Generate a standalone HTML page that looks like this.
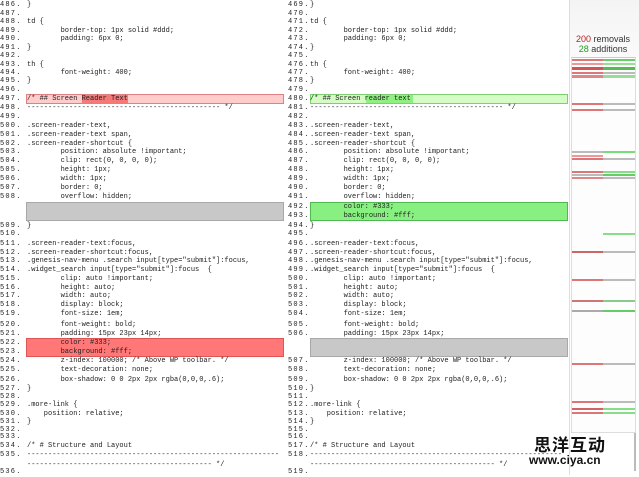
<!DOCTYPE html>
<html><head><meta charset="utf-8"><style>
body{margin:0;width:639px;height:475px;overflow:hidden;background:#fff;position:relative;font-family:"Liberation Mono",monospace;}
.l{position:absolute;height:9px;line-height:9px;font-size:7px;color:#222;white-space:pre;tab-size:8;-moz-tab-size:8;}
.n{position:absolute;letter-spacing:1.2px;}
.b{position:absolute;box-sizing:border-box;}
.m{position:absolute;height:2px;}
</style></head><body>

<!-- highlight boxes -->
<div class="b" style="left:26px;top:94px;width:258px;height:10px;background:#ffcccc;border:1px solid #e08080"></div>
<div class="b" style="left:82px;top:95px;width:46px;height:8px;background:#f47a7a"></div>
<div class="b" style="left:26px;top:202px;width:258px;height:19px;background:#c8c8c8;border:1px solid #a8a8a8"></div>
<div class="b" style="left:26px;top:338px;width:258px;height:19px;background:#f77;border:1px solid #d55"></div>

<div class="b" style="left:310px;top:94px;width:258px;height:10px;background:#d4fcc4;border:1px solid #7cd070"></div>
<div class="b" style="left:366px;top:95px;width:47px;height:8px;background:#8ef080"></div>
<div class="b" style="left:310px;top:202px;width:258px;height:19px;background:#88f080;border:1px solid #50b850"></div>
<div class="b" style="left:310px;top:338px;width:258px;height:19px;background:#c8c8c8;border:1px solid #a8a8a8"></div>
<div class="b" style="left:569px;top:0;width:1px;height:475px;background:#ddd"></div>

<!-- LEFT -->
<div class="l" style="top:0.5px;left:0"><span class="n">486.</span><span style="position:absolute;left:27px">}</span></div>
<div class="l" style="top:9.5px;left:0"><span class="n">487.</span></div>
<div class="l" style="top:18.2px;left:0"><span class="n">488.</span><span style="position:absolute;left:27px">td {</span></div>
<div class="l" style="top:26.5px;left:0"><span class="n">489.</span><span style="position:absolute;left:27px">	border-top: 1px solid #ddd;</span></div>
<div class="l" style="top:34.8px;left:0"><span class="n">490.</span><span style="position:absolute;left:27px">	padding: 6px 0;</span></div>
<div class="l" style="top:43.8px;left:0"><span class="n">491.</span><span style="position:absolute;left:27px">}</span></div>
<div class="l" style="top:52.2px;left:0"><span class="n">492.</span></div>
<div class="l" style="top:60.8px;left:0"><span class="n">493.</span><span style="position:absolute;left:27px">th {</span></div>
<div class="l" style="top:68.8px;left:0"><span class="n">494.</span><span style="position:absolute;left:27px">	font-weight: 400;</span></div>
<div class="l" style="top:77.2px;left:0"><span class="n">495.</span><span style="position:absolute;left:27px">}</span></div>
<div class="l" style="top:85.8px;left:0"><span class="n">496.</span></div>
<div class="l" style="top:94.5px;left:0"><span class="n">497.</span><span style="position:absolute;left:27px">/* ## Screen Reader Text</span></div>
<div class="l" style="top:103.8px;left:0"><span class="n">498.</span><span style="position:absolute;left:27px">---------------------------------------------- */</span></div>
<div class="l" style="top:112.8px;left:0"><span class="n">499.</span></div>
<div class="l" style="top:121.8px;left:0"><span class="n">500.</span><span style="position:absolute;left:27px">.screen-reader-text,</span></div>
<div class="l" style="top:130.5px;left:0"><span class="n">501.</span><span style="position:absolute;left:27px">.screen-reader-text span,</span></div>
<div class="l" style="top:139.5px;left:0"><span class="n">502.</span><span style="position:absolute;left:27px">.screen-reader-shortcut {</span></div>
<div class="l" style="top:148.2px;left:0"><span class="n">503.</span><span style="position:absolute;left:27px">	position: absolute !important;</span></div>
<div class="l" style="top:156.8px;left:0"><span class="n">504.</span><span style="position:absolute;left:27px">	clip: rect(0, 0, 0, 0);</span></div>
<div class="l" style="top:166.2px;left:0"><span class="n">505.</span><span style="position:absolute;left:27px">	height: 1px;</span></div>
<div class="l" style="top:175.2px;left:0"><span class="n">506.</span><span style="position:absolute;left:27px">	width: 1px;</span></div>
<div class="l" style="top:183.8px;left:0"><span class="n">507.</span><span style="position:absolute;left:27px">	border: 0;</span></div>
<div class="l" style="top:193.2px;left:0"><span class="n">508.</span><span style="position:absolute;left:27px">	overflow: hidden;</span></div>
<div class="l" style="top:221.5px;left:0"><span class="n">509.</span><span style="position:absolute;left:27px">}</span></div>
<div class="l" style="top:230.2px;left:0"><span class="n">510.</span></div>
<div class="l" style="top:239.5px;left:0"><span class="n">511.</span><span style="position:absolute;left:27px">.screen-reader-text:focus,</span></div>
<div class="l" style="top:248.5px;left:0"><span class="n">512.</span><span style="position:absolute;left:27px">.screen-reader-shortcut:focus,</span></div>
<div class="l" style="top:257.2px;left:0"><span class="n">513.</span><span style="position:absolute;left:27px">.genesis-nav-menu .search input[type="submit"]:focus,</span></div>
<div class="l" style="top:266.2px;left:0"><span class="n">514.</span><span style="position:absolute;left:27px">.widget_search input[type="submit"]:focus  {</span></div>
<div class="l" style="top:274.5px;left:0"><span class="n">515.</span><span style="position:absolute;left:27px">	clip: auto !important;</span></div>
<div class="l" style="top:283.5px;left:0"><span class="n">516.</span><span style="position:absolute;left:27px">	height: auto;</span></div>
<div class="l" style="top:292.2px;left:0"><span class="n">517.</span><span style="position:absolute;left:27px">	width: auto;</span></div>
<div class="l" style="top:301.2px;left:0"><span class="n">518.</span><span style="position:absolute;left:27px">	display: block;</span></div>
<div class="l" style="top:309.8px;left:0"><span class="n">519.</span><span style="position:absolute;left:27px">	font-size: 1em;</span></div>
<div class="l" style="top:320.5px;left:0"><span class="n">520.</span><span style="position:absolute;left:27px">	font-weight: bold;</span></div>
<div class="l" style="top:329.5px;left:0"><span class="n">521.</span><span style="position:absolute;left:27px">	padding: 15px 23px 14px;</span></div>
<div class="l" style="top:338.8px;left:0"><span class="n">522.</span><span style="position:absolute;left:27px">	color: #333;</span></div>
<div class="l" style="top:347.8px;left:0"><span class="n">523.</span><span style="position:absolute;left:27px">	background: #fff;</span></div>
<div class="l" style="top:357.2px;left:0"><span class="n">524.</span><span style="position:absolute;left:27px">	z-index: 100000; /* Above WP toolbar. */</span></div>
<div class="l" style="top:366.2px;left:0"><span class="n">525.</span><span style="position:absolute;left:27px">	text-decoration: none;</span></div>
<div class="l" style="top:375.5px;left:0"><span class="n">526.</span><span style="position:absolute;left:27px">	box-shadow: 0 0 2px 2px rgba(0,0,0,.6);</span></div>
<div class="l" style="top:384.5px;left:0"><span class="n">527.</span><span style="position:absolute;left:27px">}</span></div>
<div class="l" style="top:392.8px;left:0"><span class="n">528.</span></div>
<div class="l" style="top:401.2px;left:0"><span class="n">529.</span><span style="position:absolute;left:27px">.more-link {</span></div>
<div class="l" style="top:409.8px;left:0"><span class="n">530.</span><span style="position:absolute;left:27px">    position: relative;</span></div>
<div class="l" style="top:418.2px;left:0"><span class="n">531.</span><span style="position:absolute;left:27px">}</span></div>
<div class="l" style="top:426px;left:0"><span class="n">532.</span></div>
<div class="l" style="top:432.8px;left:0"><span class="n">533.</span></div>
<div class="l" style="top:441.5px;left:0"><span class="n">534.</span><span style="position:absolute;left:27px">/* # Structure and Layout</span></div>
<div class="l" style="top:451.2px;left:0"><span class="n">535.</span><span style="position:absolute;left:27px">------------------------------------------------------------</span></div>
<div class="l" style="top:460.5px;left:0"><span style="position:absolute;left:27px">-------------------------------------------- */</span></div>
<div class="l" style="top:468.2px;left:0"><span class="n">536.</span></div>

<!-- RIGHT -->
<div class="l" style="top:0.5px;left:288px"><span class="n">469.</span><span style="position:absolute;left:22px">}</span></div>
<div class="l" style="top:9.5px;left:288px"><span class="n">470.</span></div>
<div class="l" style="top:18.2px;left:288px"><span class="n">471.</span><span style="position:absolute;left:22px">td {</span></div>
<div class="l" style="top:26.5px;left:288px"><span class="n">472.</span><span style="position:absolute;left:22px">	border-top: 1px solid #ddd;</span></div>
<div class="l" style="top:34.8px;left:288px"><span class="n">473.</span><span style="position:absolute;left:22px">	padding: 6px 0;</span></div>
<div class="l" style="top:43.8px;left:288px"><span class="n">474.</span><span style="position:absolute;left:22px">}</span></div>
<div class="l" style="top:52.2px;left:288px"><span class="n">475.</span></div>
<div class="l" style="top:60.8px;left:288px"><span class="n">476.</span><span style="position:absolute;left:22px">th {</span></div>
<div class="l" style="top:68.8px;left:288px"><span class="n">477.</span><span style="position:absolute;left:22px">	font-weight: 400;</span></div>
<div class="l" style="top:77.2px;left:288px"><span class="n">478.</span><span style="position:absolute;left:22px">}</span></div>
<div class="l" style="top:85.8px;left:288px"><span class="n">479.</span></div>
<div class="l" style="top:94.5px;left:288px"><span class="n">480.</span><span style="position:absolute;left:22px">/* ## Screen reader text</span></div>
<div class="l" style="top:103.8px;left:288px"><span class="n">481.</span><span style="position:absolute;left:22px">---------------------------------------------- */</span></div>
<div class="l" style="top:112.8px;left:288px"><span class="n">482.</span></div>
<div class="l" style="top:121.8px;left:288px"><span class="n">483.</span><span style="position:absolute;left:22px">.screen-reader-text,</span></div>
<div class="l" style="top:130.5px;left:288px"><span class="n">484.</span><span style="position:absolute;left:22px">.screen-reader-text span,</span></div>
<div class="l" style="top:139.5px;left:288px"><span class="n">485.</span><span style="position:absolute;left:22px">.screen-reader-shortcut {</span></div>
<div class="l" style="top:148.2px;left:288px"><span class="n">486.</span><span style="position:absolute;left:22px">	position: absolute !important;</span></div>
<div class="l" style="top:156.8px;left:288px"><span class="n">487.</span><span style="position:absolute;left:22px">	clip: rect(0, 0, 0, 0);</span></div>
<div class="l" style="top:166.2px;left:288px"><span class="n">488.</span><span style="position:absolute;left:22px">	height: 1px;</span></div>
<div class="l" style="top:175.2px;left:288px"><span class="n">489.</span><span style="position:absolute;left:22px">	width: 1px;</span></div>
<div class="l" style="top:183.8px;left:288px"><span class="n">490.</span><span style="position:absolute;left:22px">	border: 0;</span></div>
<div class="l" style="top:193.2px;left:288px"><span class="n">491.</span><span style="position:absolute;left:22px">	overflow: hidden;</span></div>
<div class="l" style="top:202.8px;left:288px"><span class="n">492.</span><span style="position:absolute;left:22px">	color: #333;</span></div>
<div class="l" style="top:211.8px;left:288px"><span class="n">493.</span><span style="position:absolute;left:22px">	background: #fff;</span></div>
<div class="l" style="top:221.5px;left:288px"><span class="n">494.</span><span style="position:absolute;left:22px">}</span></div>
<div class="l" style="top:230.2px;left:288px"><span class="n">495.</span></div>
<div class="l" style="top:239.5px;left:288px"><span class="n">496.</span><span style="position:absolute;left:22px">.screen-reader-text:focus,</span></div>
<div class="l" style="top:248.5px;left:288px"><span class="n">497.</span><span style="position:absolute;left:22px">.screen-reader-shortcut:focus,</span></div>
<div class="l" style="top:257.2px;left:288px"><span class="n">498.</span><span style="position:absolute;left:22px">.genesis-nav-menu .search input[type="submit"]:focus,</span></div>
<div class="l" style="top:266.2px;left:288px"><span class="n">499.</span><span style="position:absolute;left:22px">.widget_search input[type="submit"]:focus  {</span></div>
<div class="l" style="top:274.5px;left:288px"><span class="n">500.</span><span style="position:absolute;left:22px">	clip: auto !important;</span></div>
<div class="l" style="top:283.5px;left:288px"><span class="n">501.</span><span style="position:absolute;left:22px">	height: auto;</span></div>
<div class="l" style="top:292.2px;left:288px"><span class="n">502.</span><span style="position:absolute;left:22px">	width: auto;</span></div>
<div class="l" style="top:301.2px;left:288px"><span class="n">503.</span><span style="position:absolute;left:22px">	display: block;</span></div>
<div class="l" style="top:309.8px;left:288px"><span class="n">504.</span><span style="position:absolute;left:22px">	font-size: 1em;</span></div>
<div class="l" style="top:320.5px;left:288px"><span class="n">505.</span><span style="position:absolute;left:22px">	font-weight: bold;</span></div>
<div class="l" style="top:329.5px;left:288px"><span class="n">506.</span><span style="position:absolute;left:22px">	padding: 15px 23px 14px;</span></div>
<div class="l" style="top:357.2px;left:288px"><span class="n">507.</span><span style="position:absolute;left:22px">	z-index: 100000; /* Above WP toolbar. */</span></div>
<div class="l" style="top:366.2px;left:288px"><span class="n">508.</span><span style="position:absolute;left:22px">	text-decoration: none;</span></div>
<div class="l" style="top:375.5px;left:288px"><span class="n">509.</span><span style="position:absolute;left:22px">	box-shadow: 0 0 2px 2px rgba(0,0,0,.6);</span></div>
<div class="l" style="top:384.5px;left:288px"><span class="n">510.</span><span style="position:absolute;left:22px">}</span></div>
<div class="l" style="top:392.8px;left:288px"><span class="n">511.</span></div>
<div class="l" style="top:401.2px;left:288px"><span class="n">512.</span><span style="position:absolute;left:22px">.more-link {</span></div>
<div class="l" style="top:409.8px;left:288px"><span class="n">513.</span><span style="position:absolute;left:22px">    position: relative;</span></div>
<div class="l" style="top:418.2px;left:288px"><span class="n">514.</span><span style="position:absolute;left:22px">}</span></div>
<div class="l" style="top:426px;left:288px"><span class="n">515.</span></div>
<div class="l" style="top:432.8px;left:288px"><span class="n">516.</span></div>
<div class="l" style="top:441.5px;left:288px"><span class="n">517.</span><span style="position:absolute;left:22px">/* # Structure and Layout</span></div>
<div class="l" style="top:451.2px;left:288px"><span class="n">518.</span><span style="position:absolute;left:22px">------------------------------------------------------------</span></div>
<div class="l" style="top:460.5px;left:288px"><span style="position:absolute;left:22px">-------------------------------------------- */</span></div>
<div class="l" style="top:468.2px;left:288px"><span class="n">519.</span></div>

<!-- SIDEBAR -->
<div class="b" style="left:570px;top:0;width:69px;height:57px;background:linear-gradient(#f4f4f4,#fafafa)"></div>
<div style="position:absolute;left:570px;top:34px;width:66px;text-align:center;font:9px/10px 'Liberation Sans',sans-serif;color:#333"><span style="color:#b22">200</span> removals<br><span style="color:#292">28</span> additions</div>
<div class="b" style="left:571px;top:57px;width:65px;height:376px;border:1px solid #ddd;border-top:1px solid #ccc;background:#fdfdfd"></div>
<div class="m" style="left:572px;top:59px;width:31px;background:#d77"></div><div class="m" style="left:603px;top:59px;width:32px;background:#6c6"></div>
<div class="m" style="left:572px;top:63px;width:31px;background:#e99"></div><div class="m" style="left:603px;top:63px;width:32px;background:#9d9"></div>
<div class="m" style="left:572px;top:67px;width:31px;height:3px;background:#c55"></div><div class="m" style="left:603px;top:67px;width:32px;height:3px;background:#5b5"></div>
<div class="m" style="left:572px;top:72px;width:31px;background:#d77"></div><div class="m" style="left:603px;top:72px;width:32px;background:#bbb"></div>
<div class="m" style="left:572px;top:75px;width:31px;height:3px;background:#d88"></div><div class="m" style="left:603px;top:75px;width:32px;height:3px;background:#9d9"></div>
<div class="m" style="left:572px;top:103px;width:31px;background:#d77"></div><div class="m" style="left:603px;top:103px;width:32px;background:#bbb"></div>
<div class="m" style="left:572px;top:109px;width:31px;background:#d77"></div><div class="m" style="left:603px;top:109px;width:32px;background:#bbb"></div>
<div class="m" style="left:572px;top:151px;width:31px;background:#bbb"></div><div class="m" style="left:603px;top:151px;width:32px;background:#7d7"></div>
<div class="m" style="left:572px;top:155px;width:31px;background:#e99"></div>
<div class="m" style="left:572px;top:158px;width:31px;background:#d77"></div><div class="m" style="left:603px;top:158px;width:32px;background:#bbb"></div>
<div class="m" style="left:572px;top:171px;width:31px;background:#d77"></div><div class="m" style="left:603px;top:171px;width:32px;background:#8d8"></div>
<div class="m" style="left:572px;top:174px;width:31px;background:#bbb"></div><div class="m" style="left:603px;top:174px;width:32px;background:#6c6"></div>
<div class="m" style="left:572px;top:177px;width:31px;background:#d88"></div><div class="m" style="left:603px;top:177px;width:32px;background:#bbb"></div>
<div class="m" style="left:603px;top:233px;width:32px;background:#8d8"></div>
<div class="m" style="left:572px;top:251px;width:31px;background:#c66"></div><div class="m" style="left:603px;top:251px;width:32px;background:#bbb"></div>
<div class="m" style="left:572px;top:279px;width:31px;background:#d77"></div><div class="m" style="left:603px;top:279px;width:32px;background:#bbb"></div>
<div class="m" style="left:572px;top:300px;width:31px;background:#c77"></div><div class="m" style="left:603px;top:300px;width:32px;background:#8c8"></div>
<div class="m" style="left:572px;top:310px;width:31px;background:#aaa"></div><div class="m" style="left:603px;top:310px;width:32px;background:#6c6"></div>
<div class="m" style="left:572px;top:363px;width:31px;background:#d77"></div><div class="m" style="left:603px;top:363px;width:32px;background:#bbb"></div>
<div class="m" style="left:572px;top:401px;width:31px;background:#d77"></div><div class="m" style="left:603px;top:401px;width:32px;background:#bbb"></div>
<div class="m" style="left:572px;top:408px;width:31px;background:#c66"></div><div class="m" style="left:603px;top:408px;width:32px;background:#8d8"></div>
<div class="m" style="left:572px;top:412px;width:31px;background:#d77"></div><div class="m" style="left:603px;top:412px;width:32px;background:#8d8"></div>
<div class="b" style="left:634px;top:433px;width:2px;height:38px;background:#bbb"></div>

<!-- watermark -->
<div style="position:absolute;left:534px;top:434px;font:bold 17px/19px 'Noto Sans CJK SC',sans-serif;color:#111;letter-spacing:1px;text-shadow:1px 0 #fff,-1px 0 #fff,0 1px #fff,0 -1px #fff">思洋互动</div>
<div style="position:absolute;left:529px;top:454px;font:bold 12px/13px 'Liberation Sans',sans-serif;color:#111;text-shadow:1px 0 #fff,-1px 0 #fff,0 1px #fff,0 -1px #fff">www.ciya.cn</div>
</body></html>
